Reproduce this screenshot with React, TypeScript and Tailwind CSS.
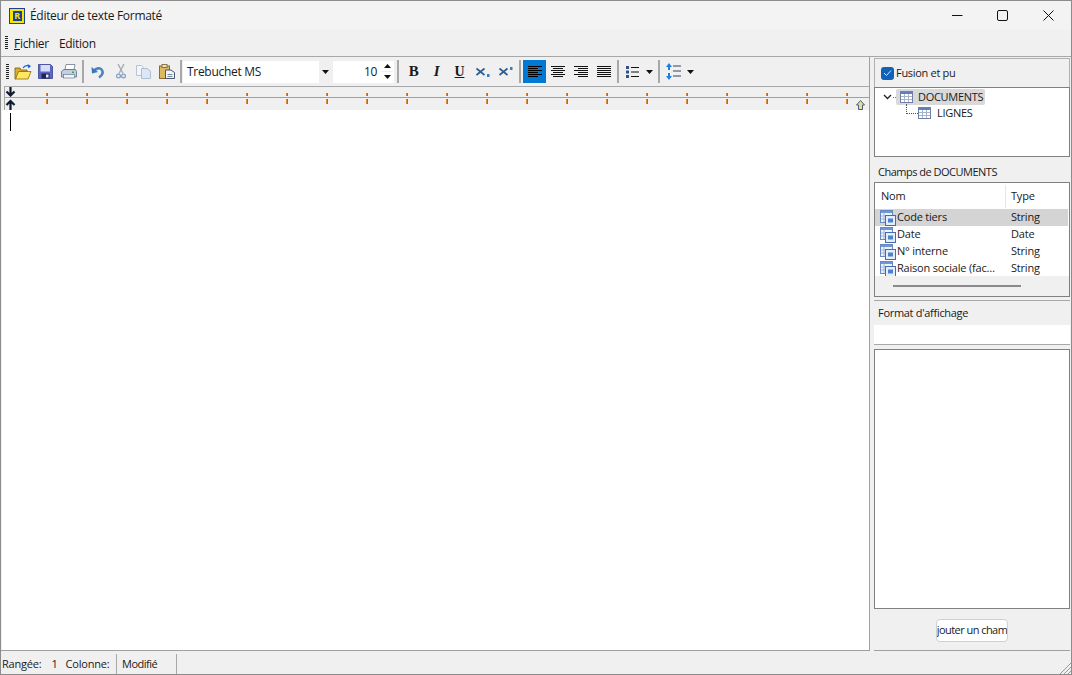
import React from "react";

const Sep = ({ w }: { w: string }) => (
  <div className={`${w} h-full flex items-center justify-center shrink-0`}>
    <div className="w-[2px] h-[23px] bg-[#a8a8a8]" />
  </div>
);

const Btn = ({ children, active }: { children: React.ReactNode; active?: boolean }) => (
  <div className={`w-[23px] h-[23px] shrink-0 flex items-center justify-center ${active ? "bg-[#0078d4]" : ""}`}>{children}</div>
);

const Caret = () => (
  <svg width="7" height="4" viewBox="0 0 7 4"><path d="M0 0h7L3.5 4z" fill="#111" /></svg>
);

const Grip = ({ h }: { h: number }) => (
  <svg width="3" height={h} viewBox={`0 0 3 ${h}`} className="shrink-0">
    {Array.from({ length: Math.floor(h / 2) }).map((_, i) => (
      <rect key={i} x="0" y={i * 2} width="3" height="1" fill="#222" />
    ))}
  </svg>
);

const OpenIcon = () => (
  <svg width="18" height="16" viewBox="0 0 18 16">
    <path d="M1 4h5l1 2h6v2H5L2 15H1z" fill="#d8b030" stroke="#7a5a10" strokeWidth=".8" />
    <path d="M4.500 7.500H17L14 15H1.500z" fill="#ffe860" stroke="#8a6a10" strokeWidth=".8" />
    <path d="M9 4c1.500-2.500 3.500-3 6-2" fill="none" stroke="#1560d0" strokeWidth="1.200" />
    <path d="M13.500 0l3.500 2-2.500 2.500z" fill="#1560d0" />
  </svg>
);
const SaveIcon = () => (
  <svg width="15" height="15" viewBox="0 0 15 15">
    <path d="M.5.500h12l2 2v12H.5z" fill="#5a66c8" stroke="#3a4090" strokeWidth=".8" />
    <rect x="2.500" y="1" width="9.500" height="6.500" fill="#d8dcf4" />
    <rect x="3.500" y="9.500" width="8" height="5" fill="#20264f" />
    <rect x="8" y="10.500" width="2.500" height="3" fill="#e8e8f0" />
  </svg>
);
const PrintIcon = () => (
  <svg width="16" height="15" viewBox="0 0 16 15">
    <path d="M5 .500h9l-1 5H4z" fill="#fff" stroke="#6a7890" strokeWidth=".8" />
    <path d="M3 5.500h11.500l1 2v5.500H.5V7.500z" fill="#c4cee0" stroke="#5a6a88" strokeWidth=".8" />
    <rect x="2.500" y="10.500" width="11" height="3.500" fill="#f0f3f8" stroke="#5a6a88" strokeWidth=".6" />
    <rect x="11" y="7.500" width="2" height="1.500" fill="#2ab040" />
  </svg>
);
const UndoIcon = () => (
  <svg width="13" height="14" viewBox="0 0 13 14">
    <path d="M3 6C5 3 9 2.500 10.500 4.500c2 2.300 1.500 5.500-2.500 8" fill="none" stroke="#4a84c4" strokeWidth="2.600" />
    <path d="M.5 2 1 8.500l6-1.500z" fill="#3d77b8" />
  </svg>
);
const CutIcon = () => (
  <svg width="10" height="15" viewBox="0 0 10 15">
    <path d="M2 0l5 9.500M8 0 3 9.500" stroke="#a8acb4" strokeWidth="1.400" fill="none" />
    <circle cx="2.500" cy="12" r="1.900" fill="none" stroke="#7f9ccc" strokeWidth="1.200" />
    <circle cx="7.500" cy="12" r="1.900" fill="none" stroke="#7f9ccc" strokeWidth="1.200" />
  </svg>
);
const CopyIcon = () => (
  <svg width="15" height="14" viewBox="0 0 15 14">
    <path d="M.5.500h5l2 2v8H.5z" fill="#f2f5fa" stroke="#b8c2d4" />
    <path d="M5.500 3.500h5.500l3.500 2.500v7.500h-9z" fill="#dce6f4" stroke="#aebcd4" />
  </svg>
);
const PasteIcon = () => (
  <svg width="16" height="15" viewBox="0 0 16 15">
    <rect x=".5" y="2" width="10" height="12.500" fill="#dcb860" stroke="#8a6a30" />
    <rect x="3" y=".5" width="5" height="3" fill="#ece0b8" stroke="#70603a" strokeWidth=".8" />
    <path d="M6.500 6h5.500l3.500 2.500v6h-9z" fill="#f0f3f8" stroke="#4a5570" />
    <path d="M8.500 10.500h5M8.500 12.500h5" stroke="#7a86a0" />
  </svg>
);
const Script = ({ sup }: { sup?: boolean }) => (
  <svg width="14" height="10" viewBox="0 0 14 10">
    <path d="M.5 1.500 8.500 8M8.500 1.500.5 8" stroke="#2f5f90" strokeWidth="1.700" fill="none" />
    {sup ? <rect x="11" y="0" width="2.500" height="3" fill="#2f80c8" /> : <rect x="11" y="7" width="2.500" height="3" fill="#2f80c8" />}
  </svg>
);
const Align = ({ mode, color }: { mode: "l" | "c" | "r" | "j"; color: string }) => {
  const rows = [14, 10, 14, 10, 14, 10];
  return (
    <svg width="14" height="11" viewBox="0 0 14 11">
      {rows.map((w, i) => {
        const wide = mode === "j" ? 14 : w;
        const x = mode === "l" || mode === "j" ? 0 : mode === "c" ? (14 - wide) / 2 : 14 - wide;
        return <rect key={i} x={x} y={i * 2} width={wide} height="1" fill={color} />;
      })}
    </svg>
  );
};
const ListIcon = () => (
  <svg width="14" height="12" viewBox="0 0 14 12">
    {[0, 4.500, 9].map((y) => (
      <g key={y}>
        <rect x="0" y={y} width="3" height="3" fill="#33508a" />
        <rect x="5" y={y + 1} width="8" height="1" fill="#111" />
      </g>
    ))}
  </svg>
);
const SpacingIcon = () => (
  <svg width="15" height="17" viewBox="0 0 15 17">
    <path d="M3 0l3 4H4v3H2V4H0z" fill="#1f7fe0" />
    <path d="M3 17l3-4H4v-3H2v3H0z" fill="#1f7fe0" />
    <path d="M7 3h8M7 8h8M7 13h8" stroke="#33405f" strokeWidth="1" />
  </svg>
);
const TreeTable = () => (
  <svg width="13" height="12" viewBox="0 0 13 12" className="shrink-0">
    <rect x=".5" y=".5" width="12" height="11" fill="#fff" stroke="#6f7fa8" />
    <rect x="1" y="1" width="11" height="2" fill="#5f7fc0" />
    <path d="M1 5.500h11M1 8.500h11M4.500 3v8M8.500 3v8" stroke="#a9b4cc" />
  </svg>
);
const FieldIcon = () => (
  <svg width="16" height="16" viewBox="0 0 16 16" className="shrink-0">
    <rect x=".5" y=".5" width="12" height="12" fill="#eef3fb" stroke="#6a88c0" />
    <rect x="1" y="1" width="11" height="2" fill="#6a98d8" />
    <path d="M1 6h5M1 9h5M4 3v9" stroke="#9fb4d8" />
    <rect x="5.500" y="5.500" width="10" height="10" fill="#e4edf9" stroke="#4a6ab0" />
    <rect x="8" y="8.500" width="5" height="4" fill="#4a84d0" />
  </svg>
);

const fields: [string, string, boolean][] = [
  ["Code tiers", "String", true],
  ["Date", "Date", false],
  ["N° interne", "String", false],
  ["Raison sociale (fac…", "String", false],
];

const serif = { fontFamily: '"Liberation Serif", serif' };

export default function App() {
  return (
    <div
      className="w-[1072px] h-[675px] flex flex-col overflow-hidden bg-[#f0f0f0] border border-[#8c8c8c] text-[12px] text-[#1a1a1a]"
      style={{ fontFamily: '"Open Sans", "Noto Sans", sans-serif', letterSpacing: "-0.3px" }}
    >
      {/* Title bar */}
      <div className="h-[29px] shrink-0 bg-[#f3f3f3] flex items-center">
        <div className="ml-[8px] w-[16px] h-[16px] bg-[#1f3f8f] flex items-center justify-center">
          <div className="w-[14px] h-[14px] bg-[#f5e400] flex items-center justify-center">
            <div className="w-[9px] h-[10px] bg-[#14409a] text-[#f5e400] text-[9px] font-bold leading-[10px] text-center">R</div>
          </div>
        </div>
        <span className="ml-[5px] pt-[1px]">Éditeur de texte Formaté</span>
        <div className="ml-auto flex items-center">
          <div className="w-[46px] flex justify-center">
            <svg width="11" height="11" viewBox="0 0 11 11"><path d="M0 5.500h10.500" stroke="#111" /></svg>
          </div>
          <div className="w-[46px] flex justify-center ml-[-1px]">
            <svg width="11" height="11" viewBox="0 0 11 11"><rect x=".5" y=".5" width="10" height="10" rx="1.500" fill="none" stroke="#111" /></svg>
          </div>
          <div className="w-[46px] flex justify-center">
            <svg width="11" height="11" viewBox="0 0 11 11"><path d="M.5.500l10 10M10.500.500l-10 10" stroke="#111" /></svg>
          </div>
        </div>
      </div>

      {/* Menu */}
      <div className="h-[27px] shrink-0 flex items-center border-b border-[#a8a8a8] pl-[4px]">
        <Grip h={14} />
        <span className="ml-[6px] pt-[2px]"><span className="underline">F</span>ichier</span>
        <span className="ml-[10px] pt-[2px]">Edition</span>
      </div>

      {/* Body */}
      <div className="flex-1 min-h-0 flex">
        {/* Left pane */}
        <div className="w-[869px] flex flex-col border-r border-b border-[#a0a0a0]">
          {/* Toolbar */}
          <div className="h-[29px] shrink-0 flex items-center">
            <div className="w-[10px] flex justify-end pr-[2px] shrink-0"><Grip h={16} /></div>
            <Btn><OpenIcon /></Btn>
            <Btn><SaveIcon /></Btn>
            <Btn><PrintIcon /></Btn>
            <Sep w="w-[6px]" />
            <Btn><UndoIcon /></Btn>
            <Btn><CutIcon /></Btn>
            <Btn><CopyIcon /></Btn>
            <Btn><PasteIcon /></Btn>
            <Sep w="w-[5px]" />
            <div className="w-[148px] h-[22px] bg-white flex items-center shrink-0">
              <span className="ml-[4px]">Trebuchet MS</span>
              <div className="ml-auto w-[12px] h-full bg-[#f0f0f0] flex items-center justify-center"><Caret /></div>
            </div>
            <div className="ml-[2px] w-[61px] h-[22px] bg-white flex items-center shrink-0">
              <span className="ml-auto mr-[4px]">10</span>
              <div className="w-[12px] h-full mr-[1px] flex flex-col items-center justify-around bg-[#f0f0f0]">
                <div className="w-full flex-1 bg-white flex items-center justify-center"><svg width="7" height="4" viewBox="0 0 7 4"><path d="M0 4h7L3.500 0z" fill="#111" /></svg></div>
                <div className="w-full flex-1 bg-white flex items-center justify-center mt-[1px]"><Caret /></div>
              </div>
            </div>
            <Sep w="w-[8px]" />
            <Btn><span className="font-bold text-[15px]" style={serif}>B</span></Btn>
            <Btn><span className="font-bold italic text-[15px]" style={serif}>I</span></Btn>
            <Btn><span className="font-bold underline text-[14px]" style={serif}>U</span></Btn>
            <Btn><Script /></Btn>
            <Btn><Script sup /></Btn>
            <Sep w="w-[6px]" />
            <Btn active><Align mode="l" color="#000" /></Btn>
            <Btn><Align mode="c" color="#111" /></Btn>
            <Btn><Align mode="r" color="#111" /></Btn>
            <Btn><Align mode="j" color="#111" /></Btn>
            <Sep w="w-[6px]" />
            <Btn><ListIcon /></Btn>
            <div className="w-[11px] flex justify-center shrink-0"><Caret /></div>
            <Sep w="w-[7px]" />
            <Btn><SpacingIcon /></Btn>
            <div className="w-[11px] flex justify-center shrink-0"><Caret /></div>
          </div>

          {/* Ruler */}
          <div className="relative h-[24px] shrink-0 ml-[3px] border-l border-t border-[#a8a8a8] flex">
            <div className="w-[6px] shrink-0" />
            <div className="flex ml-[35px]">
              {Array.from({ length: 21 }).map((_, i) => (
                <div key={i} className="w-[40px] shrink-0 h-full flex items-start">
                  <div className="w-[2px] h-[11px] mt-[6px] shrink-0 flex">
                    <div className="w-[1px] h-full shrink-0 bg-[#e8862a]" />
                    <div className="w-[1px] h-full shrink-0 bg-[#3f82c8]" />
                  </div>
                </div>
              ))}
            </div>
            <div className="absolute left-0 right-0 top-[9px] h-[3px] bg-[#a0a0a0] border-y border-[#f0f0f0]" />
            <div className="flex flex-col items-center w-[11px] shrink-0 absolute left-0 top-0">
              <svg width="11" height="10" viewBox="0 0 11 10"><path d="M5.500 0v8.500M1.500 4.500l4 4 4-4" fill="none" stroke="#0e1a2e" strokeWidth="2.200" /></svg>
              <svg width="11" height="11" viewBox="0 0 11 11" className="mt-[2px]"><path d="M5.500 11V2M1.500 6l4-4 4 4" fill="none" stroke="#0e1a2e" strokeWidth="2.200" /></svg>
            </div>
            <svg width="9" height="10" viewBox="0 0 9 10" className="absolute right-[4px] bottom-[0px]">
              <path d="M4.500 .500 8.500 5H6.500v4.500h-4V5H.500z" fill="#f0d890" stroke="#3f5f88" />
            </svg>
          </div>

          {/* Editor */}
          <div className="flex-1 bg-white ml-[1px] pl-[8px] pt-[3px]">
            <div className="w-[1px] h-[18px] bg-black" />
          </div>
        </div>

        {/* Right pane */}
        <div className="flex-1 min-w-0 flex flex-col ml-[4px] mr-[1px]">
          <div className="h-[29px] mt-[1px] shrink-0 flex items-center border-t border-l border-r border-[#b0b0b0] pl-[6px]">
            <div className="w-[13px] h-[13px] rounded-[3px] bg-[#0f62b8] flex items-center justify-center">
              <svg width="9" height="8" viewBox="0 0 9 8"><path d="M1 4l2.500 2.500L8 1.500" fill="none" stroke="#d8e6f8" /></svg>
            </div>
            <span className="ml-[2px] text-[11px]">Fusion et pu</span>
          </div>
          <div className="h-[70px] shrink-0 bg-white border border-[#808080] flex flex-col text-[11px]">
            <div className="flex items-center h-[16px] mt-[1px]">
              <svg width="9" height="6" viewBox="0 0 9 6" className="ml-[8px] shrink-0"><path d="M1 1l3.500 3.500L8 1" fill="none" stroke="#222" strokeWidth="1.300" /></svg>
              <div className="w-[3px] ml-[1px] border-t border-dotted border-[#777]" />
              <div className="h-[16px] w-[89px] bg-[#d9d9d9] rounded-[2px] flex items-center pl-[4px]">
                <TreeTable />
                <span className="ml-[5px]">DOCUMENTS</span>
              </div>
            </div>
            <div className="flex items-center h-[16px]">
              <div className="ml-[31px] w-[12px] h-[10px] mb-[8px] border-l border-b border-dotted border-[#555]" />
              <TreeTable />
              <span className="ml-[6px]">LIGNES</span>
            </div>
          </div>

          <div className="h-[25px] shrink-0 flex items-center pl-[4px] pt-[5px] text-[11px]" style={{ letterSpacing: "-0.5px" }}>Champs de DOCUMENTS</div>
          <div className="h-[115px] shrink-0 bg-white border border-[#808080] flex flex-col text-[11px]" style={{ letterSpacing: "-0.2px" }}>
            <div className="h-[25px] shrink-0 flex items-center pt-[2px]">
              <div className="w-[131px] h-full pl-[6px] flex items-center border-r border-[#e5e5e5]">Nom</div>
              <div className="pl-[5px]">Type</div>
            </div>
            {fields.map(([n, t, s]) => (
              <div key={n} className={`h-[17px] shrink-0 mr-[1px] flex items-center mt-[1px] mb-[-1px] ${s ? "bg-[#d4d4d4]" : ""}`}>
                <div className="w-[131px] pl-[5px] flex items-center gap-[1px] shrink-0">
                  <FieldIcon />
                  <span className="whitespace-nowrap">{n}</span>
                </div>
                <span className="pl-[5px]">{t}</span>
              </div>
            ))}
            <div className="flex-1 bg-[#f0f0f0] flex items-center pl-[18px]">
              <div className="w-[128px] h-[2px] bg-[#8a8a8a]" />
            </div>
          </div>

          <div className="mt-[3px] h-[45px] shrink-0 flex flex-col border-t border-b border-[#a8a8a8]">
            <div className="h-[24px] flex items-center pl-[4px] text-[11px]">Format d'affichage</div>
            <div className="flex-1 bg-white" />
          </div>

          <div className="mt-[4px] h-[260px] shrink-0 bg-white border border-[#808080]" />
          <div className="flex-1 flex items-center justify-center border-b border-[#a0a0a0]">
            <div className="w-[72px] h-[23px] overflow-hidden bg-white border border-[#d0d0d0] rounded-[4px] flex items-center justify-center mb-[-2px] text-[11px]" style={{ letterSpacing: "-0.55px" }}>
              <span className="whitespace-nowrap">jouter un cham</span>
            </div>
          </div>
        </div>
      </div>

      {/* Status bar */}
      <div className="h-[23px] shrink-0 flex items-center relative text-[11px] pt-[3px]">
        <div className="w-[116px] h-full flex items-center border-r border-[#a8a8a8] pl-[1px] whitespace-nowrap" style={{ letterSpacing: "-0.2px" }}>
          <span>Rangée:</span><span className="ml-[10px]">1</span><span className="ml-[8px]">Colonne:</span>
        </div>
        <div className="w-[60px] h-full flex items-center border-r border-[#a8a8a8] pl-[5px]" style={{ letterSpacing: "-0.5px" }}>Modifié</div>
        <svg width="12" height="12" viewBox="0 0 12 12" className="absolute right-0 bottom-0">
          <path d="M12 1 1 12M12 5 5 12M12 9 9 12" stroke="#9a9a9a" />
        </svg>
      </div>
    </div>
  );
}
